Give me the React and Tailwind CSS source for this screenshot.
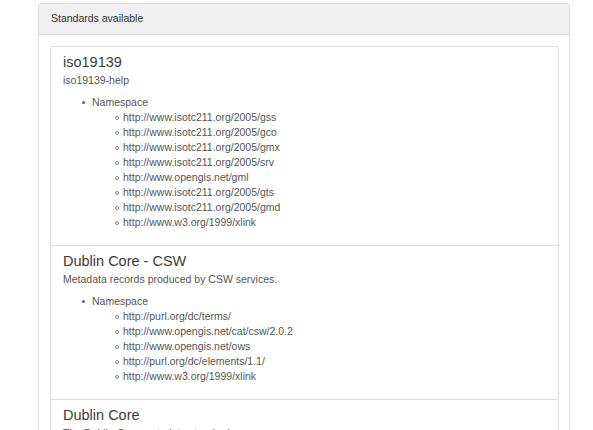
const standards = [
  {
    name: 'iso19139',
    desc: 'iso19139-help',
    ns: [
      'http://www.isotc211.org/2005/gss',
      'http://www.isotc211.org/2005/gco',
      'http://www.isotc211.org/2005/gmx',
      'http://www.isotc211.org/2005/srv',
      'http://www.opengis.net/gml',
      'http://www.isotc211.org/2005/gts',
      'http://www.isotc211.org/2005/gmd',
      'http://www.w3.org/1999/xlink',
    ],
  },
  {
    name: 'Dublin Core - CSW',
    desc: 'Metadata records produced by CSW services.',
    ns: [
      'http://purl.org/dc/terms/',
      'http://www.opengis.net/cat/csw/2.0.2',
      'http://www.opengis.net/ows',
      'http://purl.org/dc/elements/1.1/',
      'http://www.w3.org/1999/xlink',
    ],
  },
  {
    name: 'Dublin Core',
    desc: 'The Dublin Core metadata standard.',
    ns: ['http://purl.org/dc/elements/1.1/', 'http://purl.org/dc/terms/'],
  },
]

function Standard({ s, first }) {
  return (
    <div className={`px-[12px] pt-[6px] pb-[15px] ${first ? '' : 'border-t border-[#dddddd]'}`}>
      <h4 className="text-[14.5px] leading-[18px] text-[#3a3a3a]">{s.name}</h4>
      <p className="mt-[2px] text-[10.5px] leading-[15px] text-[#555]">{s.desc}</p>
      <div className="mt-[7px] text-[10.5px] leading-[15px] text-[#555]">
        <div className="flex items-center">
          <span className="ml-[19px] w-[3px] h-[3px] rounded-full bg-[#666]" />
          <span className="ml-[7px]">Namespace</span>
        </div>
        <ul>
          {s.ns.map((u, i) => (
            <li key={i} className="flex items-center">
              <span className="ml-[52px] w-[4px] h-[4px] rounded-full border border-[#888]" />
              <span className="ml-[4px]">{u}</span>
            </li>
          ))}
        </ul>
      </div>
    </div>
  )
}

export default function App() {
  return (
    <div className="bg-white pt-[3px]" style={{ fontFamily: '"Liberation Sans", Arial, sans-serif' }}>
      <div className="ml-[38px] w-[532px] border border-[#dddddd] rounded-t-[3px]">
        {/* Heading */}
        <div className="h-[31px] flex items-center px-[12px] bg-[#f0f0f0] border-b border-[#dddddd] text-[10.5px] text-[#333]">
          Standards available
        </div>

        {/* Body */}
        <div className="pt-[11px] pl-[11px] pr-[10px] pb-[11px]">
          <div className="border border-[#dddddd] rounded-[3px]">
            {standards.map((s, i) => (
              <Standard key={i} s={s} first={i === 0} />
            ))}
          </div>
        </div>
      </div>
    </div>
  )
}
